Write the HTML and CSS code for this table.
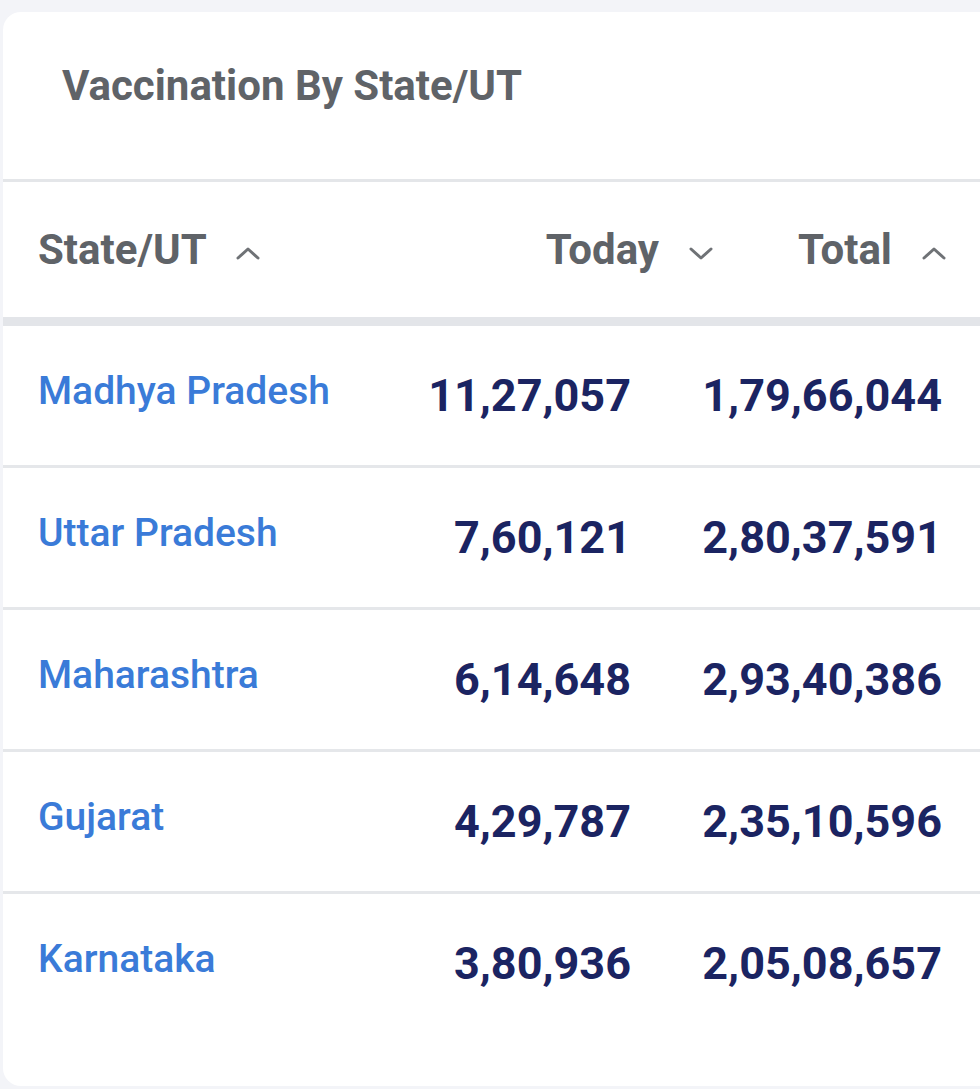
FILE: index.html
```html
<!DOCTYPE html>
<html lang="en">
<head>
<meta charset="utf-8">
<title>Vaccination By State/UT</title>
<link rel="stylesheet" href="styles.css">
</head>
<body>
<section class="card">
  <h2 class="card-title">Vaccination By State/UT</h2>
  <div class="table">
    <div class="thead">
      <div class="th th-state">State/UT
        <svg class="chev" viewBox="0 0 24 14"><path d="M2 12 L12 3 L22 12"/></svg>
      </div>
      <div class="th th-num">Today
        <svg class="chev" viewBox="0 0 24 14"><path d="M2 3 L12 12 L22 3"/></svg>
      </div>
      <div class="th th-num">Total
        <svg class="chev" viewBox="0 0 24 14"><path d="M2 12 L12 3 L22 12"/></svg>
      </div>
    </div>
    <div class="tr">
      <a class="state" href="#">Madhya Pradesh</a>
      <div class="num">11,27,057</div>
      <div class="num">1,79,66,044</div>
    </div>
    <div class="tr">
      <a class="state" href="#">Uttar Pradesh</a>
      <div class="num">7,60,121</div>
      <div class="num">2,80,37,591</div>
    </div>
    <div class="tr">
      <a class="state" href="#">Maharashtra</a>
      <div class="num">6,14,648</div>
      <div class="num">2,93,40,386</div>
    </div>
    <div class="tr">
      <a class="state" href="#">Gujarat</a>
      <div class="num">4,29,787</div>
      <div class="num">2,35,10,596</div>
    </div>
    <div class="tr last">
      <a class="state" href="#">Karnataka</a>
      <div class="num">3,80,936</div>
      <div class="num">2,05,08,657</div>
    </div>
  </div>
</section>
</body>
</html>
```
FILE: styles.css
```css
html, body {
  margin: 0;
  padding: 0;
  overflow: hidden;
}
body {
  background: #f3f4f8;
  font-family: Roboto, "Liberation Sans", Arial, sans-serif;
  width: 980px;
  height: 1089px;
}
.card {
  margin: 12px 0 0 3px;
  width: 1000px;
  background: #ffffff;
  border-radius: 18px;
  padding-bottom: 53px;
}
.card-title {
  margin: 0;
  padding: 49px 0 68px 59px;
  font-size: 42px;
  line-height: 50px;
  font-weight: 700;
  color: #5f6368;
}
.table {
  border-top: 3px solid #e4e6e9;
}
.thead {
  display: grid;
  grid-template-columns: 1fr 268px 233px;
  align-items: center;
  height: 135px;
  padding: 0 57px 0 35px;
  border-bottom: 9px solid #e3e5e9;
}
.th {
  display: flex;
  align-items: center;
  font-size: 42px;
  font-weight: 700;
  color: #5f6368;
  line-height: 50px;
}
.th-num {
  justify-content: flex-end;
}
.chev {
  width: 24px;
  height: 14px;
  margin-left: 30px;
  margin-top: 6px;
  fill: none;
  stroke: #6f7276;
  stroke-width: 3;
  stroke-linecap: round;
  stroke-linejoin: round;
}
.th-state .chev {
  margin-left: 29px;
}
.tr {
  display: grid;
  grid-template-columns: 1fr 240px 311px;
  align-items: center;
  height: 139px;
  padding: 0 61px 0 35px;
  border-bottom: 3px solid #e5e7ea;
}
.tr.last {
  border-bottom: none;
}
.state {
  font-size: 39px;
  font-weight: 500;
  color: #3a7bd8;
  text-decoration: none;
  line-height: 46px;
  padding-bottom: 9px;
}
.num {
  text-align: right;
  font-size: 45px;
  font-weight: 700;
  color: #1b2462;
  line-height: 52px;
}
```
